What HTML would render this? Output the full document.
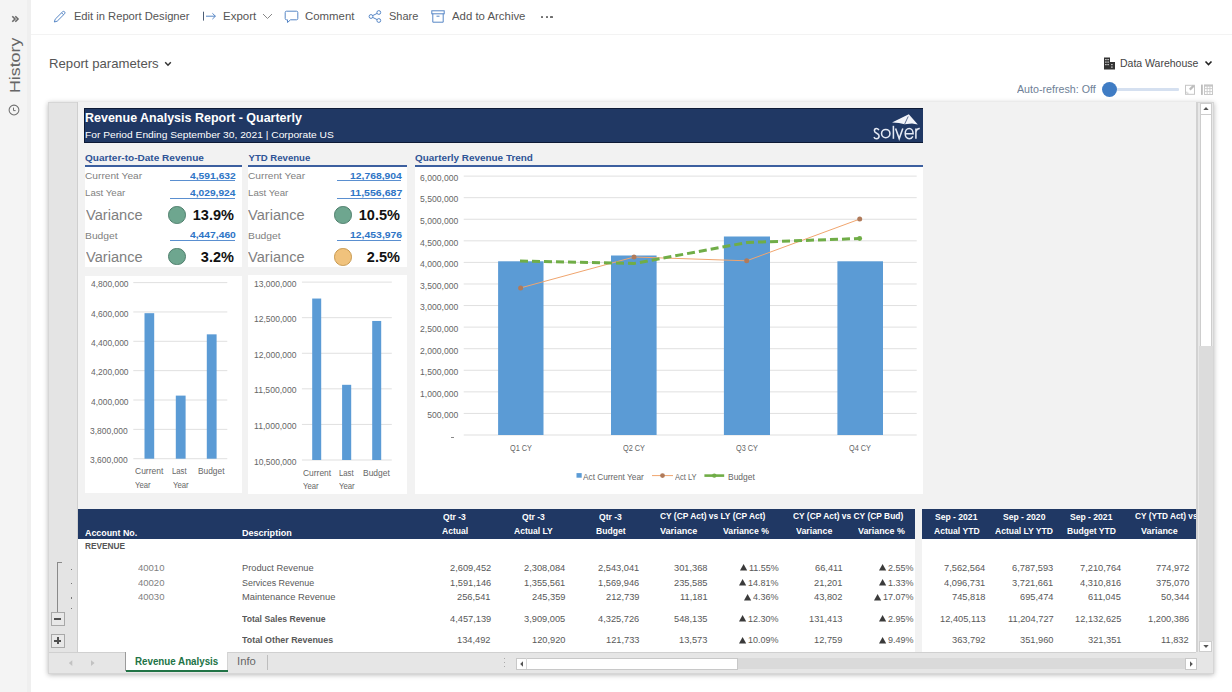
<!DOCTYPE html>
<html><head><meta charset="utf-8"><title>Revenue Analysis</title>
<style>
html,body{margin:0;padding:0;}
body{width:1232px;height:692px;overflow:hidden;position:relative;background:#ffffff;font-family:"Liberation Sans",sans-serif;}
.t{position:absolute;white-space:nowrap;}
.r{position:absolute;}
svg.r{overflow:visible;}
</style></head><body>
<div class="r" style="left:0px;top:0px;width:31px;height:692px;background:#f4f4f4;"></div>
<div class="r" style="left:27.4px;top:0px;width:3.200000000000003px;height:692px;background:#efefef;"></div>
<div class="r" style="left:31px;top:34px;width:1201px;height:1px;background:#f3f3f3;"></div>
<svg class="r" style="left:0;top:0" width="31" height="40"><path d="M12.3 16.3L15 19L12.3 21.7M15.3 16.3L18 19L15.3 21.7" fill="none" stroke="#6a6a6a" stroke-width="1.6"/></svg>
<div class="t" style="left:6.9px;top:92.7px;font-size:15px;line-height:15px;color:#666;transform-origin:0 0;transform:rotate(-90deg) scaleX(1.185);">History</div>
<svg class="r" style="left:7px;top:103px" width="14" height="14" viewBox="0 0 14 14"><circle cx="7" cy="7" r="4.9" fill="none" stroke="#707070" stroke-width="1.05"/><path d="M6.5 4.6V7.6H8.6" fill="none" stroke="#707070" stroke-width="1"/></svg>
<svg class="r" style="left:53px;top:10px" width="14" height="13" viewBox="0 0 14 13"><path d="M2.2 9.2 L9.6 1.8 Q10.6 0.9 11.6 1.8 Q12.5 2.8 11.6 3.8 L4.2 11.2 L1.3 12 Z M8.6 2.8 L10.6 4.8" fill="none" stroke="#5787c6" stroke-width="1" stroke-linejoin="round"/></svg>
<div class="t" style="left:73.88px;top:11.00px;font-size:11.20px;line-height:11.20px;color:#555;">Edit in Report Designer</div>
<svg class="r" style="left:202px;top:10px" width="15" height="12" viewBox="0 0 15 12"><path d="M1.5 1.7V10.6" fill="none" stroke="#4d5d75" stroke-width="1"/><path d="M4 6.2H13.4 M10.4 3.3L13.4 6.2L10.4 9.1" fill="none" stroke="#5787c6" stroke-width="1"/></svg>
<div class="t" style="left:222.85px;top:11.00px;font-size:11.20px;line-height:11.20px;color:#555;transform:scaleX(1.0268);transform-origin:0 0;">Export</div>
<svg class="r" style="left:262px;top:13px" width="11" height="7" viewBox="0 0 11 7"><path d="M1 1L5.5 5.5L10 1" fill="none" stroke="#888" stroke-width="1"/></svg>
<svg class="r" style="left:284px;top:10px" width="15" height="14" viewBox="0 0 15 14"><path d="M2.5 1.2H12.5Q13.8 1.2 13.8 2.5V8.5Q13.8 9.8 12.5 9.8H6.5L3.5 12.5V9.8H2.5Q1.2 9.8 1.2 8.5V2.5Q1.2 1.2 2.5 1.2Z" fill="none" stroke="#5787c6" stroke-width="1" stroke-linejoin="round"/></svg>
<div class="t" style="left:305.43px;top:11.00px;font-size:11.20px;line-height:11.20px;color:#555;transform:scaleX(1.0186);transform-origin:0 0;">Comment</div>
<svg class="r" style="left:368px;top:10px" width="14" height="13" viewBox="0 0 14 13"><circle cx="3" cy="6.5" r="1.9" fill="none" stroke="#5787c6" stroke-width="1"/><circle cx="10.8" cy="2.5" r="1.9" fill="none" stroke="#5787c6" stroke-width="1"/><circle cx="10.8" cy="10.5" r="1.9" fill="none" stroke="#5787c6" stroke-width="1"/><path d="M4.7 5.6L9.1 3.4M4.7 7.4L9.1 9.6" stroke="#5787c6" stroke-width="1"/></svg>
<div class="t" style="left:388.81px;top:11.00px;font-size:11.20px;line-height:11.20px;color:#555;transform:scaleX(0.9794);transform-origin:0 0;">Share</div>
<svg class="r" style="left:431px;top:10px" width="14" height="13" viewBox="0 0 14 13"><rect x="0.8" y="0.8" width="12.4" height="3" fill="none" stroke="#5787c6" stroke-width="1"/><path d="M1.8 3.8V12.2H12.2V3.8 M5.5 6.2H8.5" fill="none" stroke="#5787c6" stroke-width="1"/></svg>
<div class="t" style="left:451.97px;top:11.00px;font-size:11.20px;line-height:11.20px;color:#555;transform:scaleX(1.0180);transform-origin:0 0;">Add to Archive</div>
<div class="r" style="left:540.6px;top:15.5px;width:2.199999999999932px;height:2.1999999999999993px;background:#6e6e6e;border-radius:0.6px;"></div>
<div class="r" style="left:545.5px;top:15.5px;width:2.199999999999932px;height:2.1999999999999993px;background:#6e6e6e;border-radius:0.6px;"></div>
<div class="r" style="left:550.4px;top:15.5px;width:2.199999999999932px;height:2.1999999999999993px;background:#6e6e6e;border-radius:0.6px;"></div>
<div class="t" style="left:48.61px;top:58.00px;font-size:12.90px;line-height:12.90px;color:#555;transform:scaleX(1.0204);transform-origin:0 0;">Report parameters</div>
<svg class="r" style="left:164px;top:61px" width="8" height="6" viewBox="0 0 8 6"><path d="M1.2 1.3L4 4.2L6.8 1.3" fill="none" stroke="#333" stroke-width="1.5"/></svg>
<svg class="r" style="left:1103px;top:57px" width="13" height="13" viewBox="0 0 13 13"><rect x="1" y="0.5" width="6" height="12" fill="#333"/><rect x="7" y="5" width="5" height="7.5" fill="#333"/><g fill="#f4f4f4"><rect x="2.3" y="2" width="1.2" height="1.2"/><rect x="4.5" y="2" width="1.2" height="1.2"/><rect x="2.3" y="4.5" width="1.2" height="1.2"/><rect x="4.5" y="4.5" width="1.2" height="1.2"/><rect x="2.3" y="7" width="1.2" height="1.2"/><rect x="4.5" y="7" width="1.2" height="1.2"/><rect x="8.3" y="7" width="1.2" height="1.2"/><rect x="8.3" y="9.5" width="1.2" height="1.2"/></g></svg>
<div class="t" style="left:1120.13px;top:58.00px;font-size:11.00px;line-height:11.00px;color:#444;transform:scaleX(0.9537);transform-origin:0 0;">Data Warehouse</div>
<svg class="r" style="left:1204px;top:60px" width="9" height="7" viewBox="0 0 9 7"><path d="M1.5 1.5L4.5 4.5L7.5 1.5" fill="none" stroke="#222" stroke-width="1.6"/></svg>
<div class="t" style="left:1017.27px;top:84.00px;font-size:11.00px;line-height:11.00px;color:#6e7f96;transform:scaleX(0.9704);transform-origin:0 0;">Auto-refresh: Off</div>
<div class="r" style="left:1116px;top:88px;width:63px;height:2.5px;background:#d5e0f0;border-radius:1px;"></div>
<div class="r" style="left:1101.5px;top:81.5px;width:15px;height:15px;border-radius:50%;background:#3f7cc4;"></div>
<svg class="r" style="left:0;top:0" width="1232" height="120"><rect x="1185.5" y="85.3" width="9" height="9" fill="none" stroke="#c6c6c6" stroke-width="1"/><path d="M1189.8 89.6L1193.8 85.6" stroke="#bdbdbd" stroke-width="2.2"/><path d="M1186.8 91.6V93.2H1188.6" fill="none" stroke="#c8c8c8" stroke-width="0.9"/><rect x="1201" y="84.6" width="1.8" height="10.3" fill="#bcbcbc"/><rect x="1204.5" y="85.2" width="8" height="9.3" fill="none" stroke="#c8c8c8" stroke-width="1"/><rect x="1204" y="84.6" width="9" height="2" fill="#c4c4c4"/><path d="M1204.5 88.6H1212.5M1204.5 91.6H1212.5M1207.2 85V94.5M1209.9 85V94.5" stroke="#cacaca" stroke-width="0.9"/></svg>
<div class="r" style="left:48px;top:101.8px;width:1166px;height:572.2px;background:#f2f2f2;box-shadow:0 1px 5px rgba(0,0,0,0.28);border:1px solid #d6d6d6;box-sizing:border-box;"></div>
<div class="r" style="left:49px;top:102.8px;width:28px;height:549.2px;background:#e4e4e4;"></div>
<div class="r" style="left:77px;top:102px;width:1px;height:550px;background:#cfcfcf;"></div>
<div class="r" style="left:78px;top:102px;width:1118px;height:550px;overflow:hidden;background:#f2f2f2;"><div class="r" style="left:-78px;top:-102px;width:1232px;height:692px;">
<div class="r" style="left:84px;top:107.8px;width:839px;height:35.10000000000001px;background:#203864;border:1px solid #0d1a35;border-right:none;box-sizing:border-box;"></div>
<div class="t" style="left:84.66px;top:112.00px;font-size:12.94px;line-height:12.94px;color:#ffffff;font-weight:bold;transform:scaleX(0.9656);transform-origin:0 0;">Revenue Analysis Report - Quarterly</div>
<div class="t" style="left:84.66px;top:130.00px;font-size:9.88px;line-height:9.88px;color:#ffffff;transform:scaleX(1.0355);transform-origin:0 0;">For Period Ending September 30, 2021 | Corporate US</div>
<svg class="r" style="left:0;top:0" width="1232" height="150"><path d="M892 122.6L908.8 114.2L917.8 124.4L912 123.5L904.6 124.3L899 122.9Z" fill="#f2f4fa"/><path d="M908.2 116.5L904.6 124.2" stroke="#3a4d75" stroke-width="0.8"/><g fill="none" stroke="#e4e9f4" stroke-width="1.55"><path d="M878.9 130.1C878.2 128.9 877.1 128.5 876.3 128.5C875 128.5 874.4 129.6 874.4 130.8C874.4 133.6 879.1 132.9 879.1 136C879.1 137.7 878 138.7 876.4 138.7C875.3 138.7 874.4 138.1 873.9 137.1"/><circle cx="885.75" cy="133.6" r="4.2"/><path d="M893.4 125.8V138.8"/><path d="M895.6 128.5L899.2 138.6L902.8 128.5"/><path d="M905.2 133.7H913.1C913.1 130.7 911.4 128.5 909.2 128.5C906.8 128.5 905.2 130.8 905.2 133.6C905.2 136.5 906.9 138.7 909.2 138.7C910.9 138.7 912.2 137.8 912.9 136.4"/><path d="M915.9 138.8V128.4M915.9 131.8C916.5 129.4 917.9 128.5 919.8 128.6"/></g></svg>
<div class="t" style="left:85.00px;top:153.00px;font-size:9.59px;line-height:9.59px;color:#2f5496;font-weight:bold;transform:scaleX(1.0493);transform-origin:0 0;">Quarter-to-Date Revenue</div>
<div class="t" style="left:248.53px;top:153.00px;font-size:9.59px;line-height:9.59px;color:#2f5496;font-weight:bold;">YTD Revenue</div>
<div class="t" style="left:414.80px;top:153.00px;font-size:9.59px;line-height:9.59px;color:#2f5496;font-weight:bold;transform:scaleX(1.0347);transform-origin:0 0;">Quarterly Revenue Trend</div>
<div class="r" style="left:85px;top:164.6px;width:156.5px;height:2.3000000000000114px;background:#3c5f9f;"></div>
<div class="r" style="left:247.6px;top:164.6px;width:159.9px;height:2.3000000000000114px;background:#3c5f9f;"></div>
<div class="r" style="left:414.6px;top:164.6px;width:508.4px;height:2.3000000000000114px;background:#3c5f9f;"></div>
<div class="r" style="left:85px;top:166.7px;width:156.5px;height:100.40000000000003px;background:#ffffff;"></div>
<div class="t" style="left:85.29px;top:171.00px;font-size:9.88px;line-height:9.88px;color:#7f7f7f;transform:scaleX(1.0300);transform-origin:0 0;">Current Year</div>
<div class="t" style="left:85.00px;top:188.00px;font-size:9.88px;line-height:9.88px;color:#7f7f7f;transform:scaleX(0.9788);transform-origin:0 0;">Last Year</div>
<div class="t" style="left:85.73px;top:209.00px;font-size:13.95px;line-height:13.95px;color:#7f7f7f;transform:scaleX(1.0492);transform-origin:0 0;">Variance</div>
<div class="t" style="left:84.95px;top:231.00px;font-size:9.88px;line-height:9.88px;color:#7f7f7f;transform:scaleX(1.0446);transform-origin:0 0;">Budget</div>
<div class="t" style="left:85.73px;top:251.00px;font-size:13.95px;line-height:13.95px;color:#7f7f7f;transform:scaleX(1.0492);transform-origin:0 0;">Variance</div>
<div class="t" style="left:190.25px;top:171.00px;font-size:9.88px;line-height:9.88px;color:#2e75c6;font-weight:bold;transform:scaleX(1.0428);transform-origin:0 0;">4,591,632</div>
<div class="r" style="left:170.3px;top:180.3px;width:65.0px;height:1.0px;background:#5a8fd0;"></div>
<div class="t" style="left:190.25px;top:188.00px;font-size:9.88px;line-height:9.88px;color:#2e75c6;font-weight:bold;transform:scaleX(1.0352);transform-origin:0 0;">4,029,924</div>
<div class="r" style="left:170.3px;top:197.5px;width:65.0px;height:1.0px;background:#5a8fd0;"></div>
<div class="t" style="left:190.25px;top:230.00px;font-size:9.88px;line-height:9.88px;color:#2e75c6;font-weight:bold;transform:scaleX(1.0434);transform-origin:0 0;">4,447,460</div>
<div class="r" style="left:170.3px;top:240.0px;width:65.0px;height:1.0px;background:#5a8fd0;"></div>
<div class="r" style="left:168.2px;top:206.1px;width:15.6px;height:15.6px;border-radius:50%;background:#6ea68f;border:0.7px solid #4f7f6d;"></div>
<div class="t" style="left:192.76px;top:208.00px;font-size:14.53px;line-height:14.53px;color:#111;font-weight:bold;">13.9%</div>
<div class="r" style="left:168.2px;top:247.8px;width:15.6px;height:15.6px;border-radius:50%;background:#6ea68f;border:0.7px solid #4f7f6d;"></div>
<div class="t" style="left:200.86px;top:250.00px;font-size:14.53px;line-height:14.53px;color:#111;font-weight:bold;">3.2%</div>
<div class="r" style="left:247.6px;top:166.7px;width:159.9px;height:100.40000000000003px;background:#ffffff;"></div>
<div class="t" style="left:247.89px;top:171.00px;font-size:9.88px;line-height:9.88px;color:#7f7f7f;transform:scaleX(1.0300);transform-origin:0 0;">Current Year</div>
<div class="t" style="left:247.60px;top:188.00px;font-size:9.88px;line-height:9.88px;color:#7f7f7f;transform:scaleX(0.9788);transform-origin:0 0;">Last Year</div>
<div class="t" style="left:248.33px;top:209.00px;font-size:13.95px;line-height:13.95px;color:#7f7f7f;transform:scaleX(1.0492);transform-origin:0 0;">Variance</div>
<div class="t" style="left:247.55px;top:231.00px;font-size:9.88px;line-height:9.88px;color:#7f7f7f;transform:scaleX(1.0446);transform-origin:0 0;">Budget</div>
<div class="t" style="left:248.33px;top:251.00px;font-size:13.95px;line-height:13.95px;color:#7f7f7f;transform:scaleX(1.0492);transform-origin:0 0;">Variance</div>
<div class="t" style="left:349.85px;top:171.00px;font-size:9.88px;line-height:9.88px;color:#2e75c6;font-weight:bold;transform:scaleX(1.0492);transform-origin:0 0;">12,768,904</div>
<div class="r" style="left:336.7px;top:180.3px;width:64.60000000000002px;height:1.0px;background:#5a8fd0;"></div>
<div class="t" style="left:349.84px;top:188.00px;font-size:9.88px;line-height:9.88px;color:#2e75c6;font-weight:bold;transform:scaleX(1.0692);transform-origin:0 0;">11,556,687</div>
<div class="r" style="left:336.7px;top:197.5px;width:64.60000000000002px;height:1.0px;background:#5a8fd0;"></div>
<div class="t" style="left:349.85px;top:230.00px;font-size:9.88px;line-height:9.88px;color:#2e75c6;font-weight:bold;transform:scaleX(1.0556);transform-origin:0 0;">12,453,976</div>
<div class="r" style="left:336.7px;top:240.0px;width:64.60000000000002px;height:1.0px;background:#5a8fd0;"></div>
<div class="r" style="left:334.2px;top:206.1px;width:15.6px;height:15.6px;border-radius:50%;background:#6ea68f;border:0.7px solid #4f7f6d;"></div>
<div class="t" style="left:358.76px;top:208.00px;font-size:14.53px;line-height:14.53px;color:#111;font-weight:bold;">10.5%</div>
<div class="r" style="left:334.2px;top:248.0px;width:15.6px;height:15.6px;border-radius:50%;background:#f0c27c;border:0.7px solid #c99a50;"></div>
<div class="t" style="left:366.86px;top:250.00px;font-size:14.53px;line-height:14.53px;color:#111;font-weight:bold;">2.5%</div>
<div class="r" style="left:85px;top:275.6px;width:157px;height:217.89999999999998px;background:#ffffff;"></div>
<svg class="r" style="left:0;top:0" width="1232" height="692"><rect x="133.3" y="282.10" width="94.00" height="1" fill="#e0e0e0"/><rect x="133.3" y="311.45" width="94.00" height="1" fill="#e0e0e0"/><rect x="133.3" y="340.80" width="94.00" height="1" fill="#e0e0e0"/><rect x="133.3" y="370.15" width="94.00" height="1" fill="#e0e0e0"/><rect x="133.3" y="399.50" width="94.00" height="1" fill="#e0e0e0"/><rect x="133.3" y="428.85" width="94.00" height="1" fill="#e0e0e0"/><rect x="133.3" y="458.20" width="94.00" height="1" fill="#e0e0e0"/><rect x="144.5" y="313.18" width="9.70" height="145.52" fill="#5b9bd5"/><rect x="175.8" y="395.61" width="9.80" height="63.09" fill="#5b9bd5"/><rect x="206.8" y="334.34" width="9.80" height="124.36" fill="#5b9bd5"/></svg>
<div class="t" style="left:90.61px;top:280.00px;font-size:8.58px;line-height:8.58px;color:#666;transform:scaleX(0.9834);transform-origin:0 0;">4,800,000</div>
<div class="t" style="left:90.61px;top:310.00px;font-size:8.58px;line-height:8.58px;color:#666;transform:scaleX(0.9834);transform-origin:0 0;">4,600,000</div>
<div class="t" style="left:90.61px;top:339.00px;font-size:8.58px;line-height:8.58px;color:#666;transform:scaleX(0.9834);transform-origin:0 0;">4,400,000</div>
<div class="t" style="left:90.61px;top:368.00px;font-size:8.58px;line-height:8.58px;color:#666;transform:scaleX(0.9834);transform-origin:0 0;">4,200,000</div>
<div class="t" style="left:90.61px;top:398.00px;font-size:8.58px;line-height:8.58px;color:#666;transform:scaleX(0.9834);transform-origin:0 0;">4,000,000</div>
<div class="t" style="left:90.48px;top:427.00px;font-size:8.58px;line-height:8.58px;color:#666;transform:scaleX(0.9868);transform-origin:0 0;">3,800,000</div>
<div class="t" style="left:90.48px;top:456.00px;font-size:8.58px;line-height:8.58px;color:#666;transform:scaleX(0.9868);transform-origin:0 0;">3,600,000</div>
<div class="t" style="left:135.18px;top:467.00px;font-size:8.58px;line-height:8.58px;color:#666;transform:scaleX(0.9891);transform-origin:0 0;">Current</div>
<div class="t" style="left:135.43px;top:481.00px;font-size:8.58px;line-height:8.58px;color:#666;transform:scaleX(0.8999);transform-origin:0 0;">Year</div>
<div class="t" style="left:172.16px;top:467.00px;font-size:8.58px;line-height:8.58px;color:#666;transform:scaleX(0.9005);transform-origin:0 0;">Last</div>
<div class="t" style="left:172.63px;top:481.00px;font-size:8.58px;line-height:8.58px;color:#666;transform:scaleX(0.9058);transform-origin:0 0;">Year</div>
<div class="t" style="left:197.91px;top:467.00px;font-size:8.58px;line-height:8.58px;color:#666;transform:scaleX(0.9730);transform-origin:0 0;">Budget</div>
<div class="r" style="left:247.6px;top:275.2px;width:159.9px;height:218.8px;background:#ffffff;"></div>
<svg class="r" style="left:0;top:0" width="1232" height="692"><rect x="301.9" y="281.60" width="89.90" height="1" fill="#e0e0e0"/><rect x="301.9" y="317.18" width="89.90" height="1" fill="#e0e0e0"/><rect x="301.9" y="352.76" width="89.90" height="1" fill="#e0e0e0"/><rect x="301.9" y="388.34" width="89.90" height="1" fill="#e0e0e0"/><rect x="301.9" y="423.92" width="89.90" height="1" fill="#e0e0e0"/><rect x="301.9" y="459.50" width="89.90" height="1" fill="#e0e0e0"/><rect x="312.2" y="298.54" width="9.00" height="161.46" fill="#5b9bd5"/><rect x="342.1" y="384.81" width="9.10" height="75.19" fill="#5b9bd5"/><rect x="372.2" y="320.96" width="9.00" height="139.04" fill="#5b9bd5"/></svg>
<div class="t" style="left:253.56px;top:280.00px;font-size:8.58px;line-height:8.58px;color:#666;transform:scaleX(0.9891);transform-origin:0 0;">13,000,000</div>
<div class="t" style="left:253.56px;top:315.00px;font-size:8.58px;line-height:8.58px;color:#666;transform:scaleX(0.9891);transform-origin:0 0;">12,500,000</div>
<div class="t" style="left:253.56px;top:351.00px;font-size:8.58px;line-height:8.58px;color:#666;transform:scaleX(0.9891);transform-origin:0 0;">12,000,000</div>
<div class="t" style="left:253.55px;top:386.00px;font-size:8.58px;line-height:8.58px;color:#666;transform:scaleX(1.0045);transform-origin:0 0;">11,500,000</div>
<div class="t" style="left:253.55px;top:422.00px;font-size:8.58px;line-height:8.58px;color:#666;transform:scaleX(1.0045);transform-origin:0 0;">11,000,000</div>
<div class="t" style="left:253.56px;top:458.00px;font-size:8.58px;line-height:8.58px;color:#666;transform:scaleX(0.9891);transform-origin:0 0;">10,500,000</div>
<div class="t" style="left:302.58px;top:469.00px;font-size:8.58px;line-height:8.58px;color:#666;transform:scaleX(0.9820);transform-origin:0 0;">Current</div>
<div class="t" style="left:302.83px;top:482.00px;font-size:8.58px;line-height:8.58px;color:#666;transform:scaleX(0.8999);transform-origin:0 0;">Year</div>
<div class="t" style="left:338.56px;top:469.00px;font-size:8.58px;line-height:8.58px;color:#666;transform:scaleX(0.9005);transform-origin:0 0;">Last</div>
<div class="t" style="left:339.03px;top:482.00px;font-size:8.58px;line-height:8.58px;color:#666;transform:scaleX(0.9058);transform-origin:0 0;">Year</div>
<div class="t" style="left:363.10px;top:469.00px;font-size:8.58px;line-height:8.58px;color:#666;transform:scaleX(0.9844);transform-origin:0 0;">Budget</div>
<div class="r" style="left:414.6px;top:166.7px;width:508.79999999999995px;height:327.3px;background:#ffffff;"></div>
<svg class="r" style="left:0;top:0" width="1232" height="692"><rect x="463.7" y="175.60" width="453" height="1" fill="#e0e0e0"/><rect x="463.7" y="197.17" width="453" height="1" fill="#e0e0e0"/><rect x="463.7" y="218.75" width="453" height="1" fill="#e0e0e0"/><rect x="463.7" y="240.32" width="453" height="1" fill="#e0e0e0"/><rect x="463.7" y="261.90" width="453" height="1" fill="#e0e0e0"/><rect x="463.7" y="283.48" width="453" height="1" fill="#e0e0e0"/><rect x="463.7" y="305.05" width="453" height="1" fill="#e0e0e0"/><rect x="463.7" y="326.62" width="453" height="1" fill="#e0e0e0"/><rect x="463.7" y="348.20" width="453" height="1" fill="#e0e0e0"/><rect x="463.7" y="369.77" width="453" height="1" fill="#e0e0e0"/><rect x="463.7" y="391.35" width="453" height="1" fill="#e0e0e0"/><rect x="463.7" y="412.92" width="453" height="1" fill="#e0e0e0"/><rect x="463.7" y="434.50" width="453" height="1" fill="#e0e0e0"/><rect x="498.1" y="261.3" width="45.4" height="173.7" fill="#5b9bd5"/><rect x="611" y="255.5" width="45.6" height="179.5" fill="#5b9bd5"/><rect x="723.9" y="236.5" width="46.1" height="198.5" fill="#5b9bd5"/><rect x="837.4" y="261.3" width="45.6" height="173.7" fill="#5b9bd5"/><polyline points="520.6,287.9 634,257 746.7,260.8 859.7,219.1" fill="none" stroke="#f0a56e" stroke-width="1"/><circle cx="520.6" cy="287.9" r="2.5" fill="#b07a5a"/><circle cx="634" cy="257" r="2.5" fill="#b07a5a"/><circle cx="746.7" cy="260.8" r="2.5" fill="#b07a5a"/><circle cx="859.7" cy="219.1" r="2.5" fill="#b07a5a"/><polyline points="520,261 634,263.5 747,242.5 859.7,238.5" fill="none" stroke="#70ad47" stroke-width="3" stroke-dasharray="8 4"/><circle cx="859.7" cy="238.5" r="2.4" fill="#70ad47"/><rect x="576.5" y="473.1" width="5.2" height="4.6" fill="#5b9bd5"/><path d="M652 475.6H673" stroke="#f0a56e" stroke-width="1"/><circle cx="662.5" cy="475.6" r="2.4" fill="#b07a5a"/><path d="M704.4 475.6H724.2" stroke="#70ad47" stroke-width="2.6"/><circle cx="714.3" cy="475.6" r="2.2" fill="#70ad47"/></svg>
<div class="t" style="left:420.08px;top:174.00px;font-size:8.58px;line-height:8.58px;color:#666;">6,000,000</div>
<div class="t" style="left:420.08px;top:195.00px;font-size:8.58px;line-height:8.58px;color:#666;">5,500,000</div>
<div class="t" style="left:420.08px;top:217.00px;font-size:8.58px;line-height:8.58px;color:#666;">5,000,000</div>
<div class="t" style="left:420.08px;top:239.00px;font-size:8.58px;line-height:8.58px;color:#666;">4,500,000</div>
<div class="t" style="left:420.08px;top:260.00px;font-size:8.58px;line-height:8.58px;color:#666;">4,000,000</div>
<div class="t" style="left:420.08px;top:282.00px;font-size:8.58px;line-height:8.58px;color:#666;">3,500,000</div>
<div class="t" style="left:420.08px;top:303.00px;font-size:8.58px;line-height:8.58px;color:#666;">3,000,000</div>
<div class="t" style="left:420.08px;top:325.00px;font-size:8.58px;line-height:8.58px;color:#666;">2,500,000</div>
<div class="t" style="left:420.08px;top:347.00px;font-size:8.58px;line-height:8.58px;color:#666;">2,000,000</div>
<div class="t" style="left:420.08px;top:368.00px;font-size:8.58px;line-height:8.58px;color:#666;">1,500,000</div>
<div class="t" style="left:420.08px;top:390.00px;font-size:8.58px;line-height:8.58px;color:#666;">1,000,000</div>
<div class="t" style="left:427.24px;top:411.00px;font-size:8.58px;line-height:8.58px;color:#666;">500,000</div>
<div class="r" style="left:451px;top:437px;width:3px;height:1px;background:#888;"></div>
<div class="t" style="left:509.70px;top:444.00px;font-size:8.58px;line-height:8.58px;color:#666;transform:scaleX(0.8549);transform-origin:0 0;">Q1 CY</div>
<div class="t" style="left:622.70px;top:444.00px;font-size:8.58px;line-height:8.58px;color:#666;transform:scaleX(0.8549);transform-origin:0 0;">Q2 CY</div>
<div class="t" style="left:735.85px;top:444.00px;font-size:8.58px;line-height:8.58px;color:#666;transform:scaleX(0.8549);transform-origin:0 0;">Q3 CY</div>
<div class="t" style="left:849.10px;top:444.00px;font-size:8.58px;line-height:8.58px;color:#666;transform:scaleX(0.8549);transform-origin:0 0;">Q4 CY</div>
<div class="t" style="left:583.28px;top:473.00px;font-size:8.58px;line-height:8.58px;color:#666;transform:scaleX(0.9654);transform-origin:0 0;">Act Current Year</div>
<div class="t" style="left:675.18px;top:473.00px;font-size:8.58px;line-height:8.58px;color:#666;transform:scaleX(0.8764);transform-origin:0 0;">Act LY</div>
<div class="t" style="left:727.60px;top:473.00px;font-size:8.58px;line-height:8.58px;color:#666;transform:scaleX(0.9844);transform-origin:0 0;">Budget</div>
<div class="r" style="left:78px;top:508.7px;width:837px;height:30.69999999999999px;background:#203864;"></div>
<div class="r" style="left:922.4px;top:508.7px;width:273.80000000000007px;height:30.69999999999999px;background:#203864;"></div>
<div class="r" style="left:78px;top:539.4px;width:837px;height:160.60000000000002px;background:#ffffff;"></div>
<div class="r" style="left:922.4px;top:539.4px;width:273.80000000000007px;height:160.60000000000002px;background:#ffffff;"></div>
<div class="t" style="left:85.28px;top:528.00px;font-size:9.59px;line-height:9.59px;color:#ffffff;font-weight:bold;transform:scaleX(0.9246);transform-origin:0 0;">Account No.</div>
<div class="t" style="left:241.69px;top:528.00px;font-size:9.59px;line-height:9.59px;color:#ffffff;font-weight:bold;transform:scaleX(0.9430);transform-origin:0 0;">Description</div>
<div class="t" style="left:443.34px;top:512.00px;font-size:9.59px;line-height:9.59px;color:#ffffff;font-weight:bold;transform:scaleX(0.8950);transform-origin:0 0;">Qtr -3</div>
<div class="t" style="left:441.88px;top:526.00px;font-size:9.59px;line-height:9.59px;color:#ffffff;font-weight:bold;transform:scaleX(0.8950);transform-origin:0 0;">Actual</div>
<div class="t" style="left:521.74px;top:512.00px;font-size:9.59px;line-height:9.59px;color:#ffffff;font-weight:bold;transform:scaleX(0.8950);transform-origin:0 0;">Qtr -3</div>
<div class="t" style="left:513.76px;top:526.00px;font-size:9.59px;line-height:9.59px;color:#ffffff;font-weight:bold;transform:scaleX(0.8950);transform-origin:0 0;">Actual LY</div>
<div class="t" style="left:599.14px;top:512.00px;font-size:9.59px;line-height:9.59px;color:#ffffff;font-weight:bold;transform:scaleX(0.8950);transform-origin:0 0;">Qtr -3</div>
<div class="t" style="left:595.59px;top:526.00px;font-size:9.59px;line-height:9.59px;color:#ffffff;font-weight:bold;transform:scaleX(0.8950);transform-origin:0 0;">Budget</div>
<div class="t" style="left:935.05px;top:512.00px;font-size:9.59px;line-height:9.59px;color:#ffffff;font-weight:bold;transform:scaleX(0.8950);transform-origin:0 0;">Sep - 2021</div>
<div class="t" style="left:933.55px;top:526.00px;font-size:9.59px;line-height:9.59px;color:#ffffff;font-weight:bold;transform:scaleX(0.8950);transform-origin:0 0;">Actual YTD</div>
<div class="t" style="left:1003.10px;top:512.00px;font-size:9.59px;line-height:9.59px;color:#ffffff;font-weight:bold;transform:scaleX(0.8950);transform-origin:0 0;">Sep - 2020</div>
<div class="t" style="left:995.34px;top:526.00px;font-size:9.59px;line-height:9.59px;color:#ffffff;font-weight:bold;transform:scaleX(0.8950);transform-origin:0 0;">Actual LY YTD</div>
<div class="t" style="left:1070.35px;top:512.00px;font-size:9.59px;line-height:9.59px;color:#ffffff;font-weight:bold;transform:scaleX(0.8950);transform-origin:0 0;">Sep - 2021</div>
<div class="t" style="left:1067.00px;top:526.00px;font-size:9.59px;line-height:9.59px;color:#ffffff;font-weight:bold;transform:scaleX(0.8950);transform-origin:0 0;">Budget YTD</div>
<div class="t" style="left:659.66px;top:511.00px;font-size:9.59px;line-height:9.59px;color:#ffffff;font-weight:bold;transform:scaleX(0.8766);transform-origin:0 0;">CY (CP Act) vs LY (CP Act)</div>
<div class="t" style="left:793.06px;top:511.00px;font-size:9.59px;line-height:9.59px;color:#ffffff;font-weight:bold;transform:scaleX(0.8773);transform-origin:0 0;">CY (CP Act) vs CY (CP Bud)</div>
<div class="t" style="left:1134.67px;top:511.00px;font-size:9.59px;line-height:9.59px;color:#ffffff;font-weight:bold;transform:scaleX(0.8646);transform-origin:0 0;">CY (YTD Act) vs</div>
<div class="t" style="left:659.93px;top:526.00px;font-size:9.59px;line-height:9.59px;color:#ffffff;font-weight:bold;transform:scaleX(0.9471);transform-origin:0 0;">Variance</div>
<div class="t" style="left:723.23px;top:526.00px;font-size:9.59px;line-height:9.59px;color:#ffffff;font-weight:bold;transform:scaleX(0.9078);transform-origin:0 0;">Variance %</div>
<div class="t" style="left:795.93px;top:526.00px;font-size:9.59px;line-height:9.59px;color:#ffffff;font-weight:bold;transform:scaleX(0.9215);transform-origin:0 0;">Variance</div>
<div class="t" style="left:858.33px;top:526.00px;font-size:9.59px;line-height:9.59px;color:#ffffff;font-weight:bold;transform:scaleX(0.9257);transform-origin:0 0;">Variance %</div>
<div class="t" style="left:1141.28px;top:526.00px;font-size:9.59px;line-height:9.59px;color:#ffffff;font-weight:bold;transform:scaleX(0.9343);transform-origin:0 0;">Variance</div>
<div class="t" style="left:84.94px;top:541.00px;font-size:9.59px;line-height:9.59px;color:#555;font-weight:bold;transform:scaleX(0.8666);transform-origin:0 0;">REVENUE</div>
<div class="t" style="left:138.49px;top:563.00px;font-size:9.67px;line-height:9.67px;color:#7f7f7f;transform:scaleX(0.9851);transform-origin:0 0;">40010</div>
<div class="t" style="left:241.73px;top:563.00px;font-size:9.67px;line-height:9.67px;color:#595959;transform:scaleX(0.9597);transform-origin:0 0;">Product Revenue</div>
<div class="t" style="left:449.68px;top:563.00px;font-size:9.67px;line-height:9.67px;color:#595959;transform:scaleX(0.9603);transform-origin:0 0;">2,609,452</div>
<div class="t" style="left:524.17px;top:563.00px;font-size:9.67px;line-height:9.67px;color:#595959;transform:scaleX(0.9603);transform-origin:0 0;">2,308,084</div>
<div class="t" style="left:598.26px;top:563.00px;font-size:9.67px;line-height:9.67px;color:#595959;transform:scaleX(0.9603);transform-origin:0 0;">2,543,041</div>
<div class="t" style="left:673.66px;top:563.00px;font-size:9.67px;line-height:9.67px;color:#595959;transform:scaleX(0.9603);transform-origin:0 0;">301,368</div>
<div class="t" style="left:748.52px;top:563.00px;font-size:9.67px;line-height:9.67px;color:#595959;transform:scaleX(0.9323);transform-origin:0 0;">11.55%</div>
<svg class="r" style="left:740.1px;top:564.3px" width="7.2" height="6.4" viewBox="0 0 7.2 6.4"><path d="M3.6 0L7.2 6.4H0Z" fill="#3a3a3a"/></svg>
<div class="t" style="left:814.76px;top:563.00px;font-size:9.67px;line-height:9.67px;color:#595959;transform:scaleX(0.9603);transform-origin:0 0;">66,411</div>
<div class="t" style="left:887.74px;top:563.00px;font-size:9.67px;line-height:9.67px;color:#595959;transform:scaleX(0.9323);transform-origin:0 0;">2.55%</div>
<svg class="r" style="left:879.1px;top:564.3px" width="7.2" height="6.4" viewBox="0 0 7.2 6.4"><path d="M3.6 0L7.2 6.4H0Z" fill="#3a3a3a"/></svg>
<div class="t" style="left:943.87px;top:563.00px;font-size:9.67px;line-height:9.67px;color:#595959;transform:scaleX(0.9603);transform-origin:0 0;">7,562,564</div>
<div class="t" style="left:1011.91px;top:563.00px;font-size:9.67px;line-height:9.67px;color:#595959;transform:scaleX(0.9603);transform-origin:0 0;">6,787,593</div>
<div class="t" style="left:1079.77px;top:563.00px;font-size:9.67px;line-height:9.67px;color:#595959;transform:scaleX(0.9603);transform-origin:0 0;">7,210,764</div>
<div class="t" style="left:1155.63px;top:563.00px;font-size:9.67px;line-height:9.67px;color:#595959;transform:scaleX(0.9603);transform-origin:0 0;">774,972</div>
<div class="t" style="left:138.49px;top:578.00px;font-size:9.67px;line-height:9.67px;color:#7f7f7f;transform:scaleX(0.9851);transform-origin:0 0;">40020</div>
<div class="t" style="left:242.10px;top:578.00px;font-size:9.67px;line-height:9.67px;color:#595959;transform:scaleX(0.9215);transform-origin:0 0;">Services Revenue</div>
<div class="t" style="left:449.61px;top:578.00px;font-size:9.67px;line-height:9.67px;color:#595959;transform:scaleX(0.9603);transform-origin:0 0;">1,591,146</div>
<div class="t" style="left:524.36px;top:578.00px;font-size:9.67px;line-height:9.67px;color:#595959;transform:scaleX(0.9603);transform-origin:0 0;">1,355,561</div>
<div class="t" style="left:598.21px;top:578.00px;font-size:9.67px;line-height:9.67px;color:#595959;transform:scaleX(0.9603);transform-origin:0 0;">1,569,946</div>
<div class="t" style="left:673.64px;top:578.00px;font-size:9.67px;line-height:9.67px;color:#595959;transform:scaleX(0.9603);transform-origin:0 0;">235,585</div>
<div class="t" style="left:747.84px;top:578.00px;font-size:9.67px;line-height:9.67px;color:#595959;transform:scaleX(0.9323);transform-origin:0 0;">14.81%</div>
<svg class="r" style="left:739.4px;top:579.2px" width="7.2" height="6.4" viewBox="0 0 7.2 6.4"><path d="M3.6 0L7.2 6.4H0Z" fill="#3a3a3a"/></svg>
<div class="t" style="left:814.06px;top:578.00px;font-size:9.67px;line-height:9.67px;color:#595959;transform:scaleX(0.9603);transform-origin:0 0;">21,201</div>
<div class="t" style="left:887.74px;top:578.00px;font-size:9.67px;line-height:9.67px;color:#595959;transform:scaleX(0.9323);transform-origin:0 0;">1.33%</div>
<svg class="r" style="left:879.3px;top:579.2px" width="7.2" height="6.4" viewBox="0 0 7.2 6.4"><path d="M3.6 0L7.2 6.4H0Z" fill="#3a3a3a"/></svg>
<div class="t" style="left:944.06px;top:578.00px;font-size:9.67px;line-height:9.67px;color:#595959;transform:scaleX(0.9603);transform-origin:0 0;">4,096,731</div>
<div class="t" style="left:1011.96px;top:578.00px;font-size:9.67px;line-height:9.67px;color:#595959;transform:scaleX(0.9603);transform-origin:0 0;">3,721,661</div>
<div class="t" style="left:1079.91px;top:578.00px;font-size:9.67px;line-height:9.67px;color:#595959;transform:scaleX(0.9603);transform-origin:0 0;">4,310,816</div>
<div class="t" style="left:1155.52px;top:578.00px;font-size:9.67px;line-height:9.67px;color:#595959;transform:scaleX(0.9603);transform-origin:0 0;">375,070</div>
<div class="t" style="left:138.49px;top:592.00px;font-size:9.67px;line-height:9.67px;color:#7f7f7f;transform:scaleX(0.9851);transform-origin:0 0;">40030</div>
<div class="t" style="left:241.73px;top:592.00px;font-size:9.67px;line-height:9.67px;color:#595959;transform:scaleX(0.9665);transform-origin:0 0;">Maintenance Revenue</div>
<div class="t" style="left:457.41px;top:592.00px;font-size:9.67px;line-height:9.67px;color:#595959;transform:scaleX(0.9603);transform-origin:0 0;">256,541</div>
<div class="t" style="left:532.09px;top:592.00px;font-size:9.67px;line-height:9.67px;color:#595959;transform:scaleX(0.9603);transform-origin:0 0;">245,359</div>
<div class="t" style="left:605.99px;top:592.00px;font-size:9.67px;line-height:9.67px;color:#595959;transform:scaleX(0.9603);transform-origin:0 0;">212,739</div>
<div class="t" style="left:679.56px;top:592.00px;font-size:9.67px;line-height:9.67px;color:#595959;transform:scaleX(0.9603);transform-origin:0 0;">11,181</div>
<div class="t" style="left:752.84px;top:592.00px;font-size:9.67px;line-height:9.67px;color:#595959;transform:scaleX(0.9323);transform-origin:0 0;">4.36%</div>
<svg class="r" style="left:743.9px;top:593.9px" width="7.2" height="6.4" viewBox="0 0 7.2 6.4"><path d="M3.6 0L7.2 6.4H0Z" fill="#3a3a3a"/></svg>
<div class="t" style="left:814.08px;top:592.00px;font-size:9.67px;line-height:9.67px;color:#595959;transform:scaleX(0.9603);transform-origin:0 0;">43,802</div>
<div class="t" style="left:882.74px;top:592.00px;font-size:9.67px;line-height:9.67px;color:#595959;transform:scaleX(0.9323);transform-origin:0 0;">17.07%</div>
<svg class="r" style="left:874.3px;top:593.9px" width="7.2" height="6.4" viewBox="0 0 7.2 6.4"><path d="M3.6 0L7.2 6.4H0Z" fill="#3a3a3a"/></svg>
<div class="t" style="left:951.76px;top:592.00px;font-size:9.67px;line-height:9.67px;color:#595959;transform:scaleX(0.9603);transform-origin:0 0;">745,818</div>
<div class="t" style="left:1019.52px;top:592.00px;font-size:9.67px;line-height:9.67px;color:#595959;transform:scaleX(0.9603);transform-origin:0 0;">695,474</div>
<div class="t" style="left:1088.31px;top:592.00px;font-size:9.67px;line-height:9.67px;color:#595959;transform:scaleX(0.9603);transform-origin:0 0;">611,045</div>
<div class="t" style="left:1160.58px;top:592.00px;font-size:9.67px;line-height:9.67px;color:#595959;transform:scaleX(0.9603);transform-origin:0 0;">50,344</div>
<div class="t" style="left:242.41px;top:614.00px;font-size:9.67px;line-height:9.67px;color:#595959;font-weight:bold;transform:scaleX(0.8959);transform-origin:0 0;">Total Sales Revenue</div>
<div class="t" style="left:449.64px;top:614.00px;font-size:9.67px;line-height:9.67px;color:#595959;transform:scaleX(0.9603);transform-origin:0 0;">4,457,139</div>
<div class="t" style="left:524.29px;top:614.00px;font-size:9.67px;line-height:9.67px;color:#595959;transform:scaleX(0.9603);transform-origin:0 0;">3,909,005</div>
<div class="t" style="left:598.21px;top:614.00px;font-size:9.67px;line-height:9.67px;color:#595959;transform:scaleX(0.9603);transform-origin:0 0;">4,325,726</div>
<div class="t" style="left:673.64px;top:614.00px;font-size:9.67px;line-height:9.67px;color:#595959;transform:scaleX(0.9603);transform-origin:0 0;">548,135</div>
<div class="t" style="left:747.84px;top:614.00px;font-size:9.67px;line-height:9.67px;color:#595959;transform:scaleX(0.9323);transform-origin:0 0;">12.30%</div>
<svg class="r" style="left:739.4px;top:615.3px" width="7.2" height="6.4" viewBox="0 0 7.2 6.4"><path d="M3.6 0L7.2 6.4H0Z" fill="#3a3a3a"/></svg>
<div class="t" style="left:808.86px;top:614.00px;font-size:9.67px;line-height:9.67px;color:#595959;transform:scaleX(0.9603);transform-origin:0 0;">131,413</div>
<div class="t" style="left:887.74px;top:614.00px;font-size:9.67px;line-height:9.67px;color:#595959;transform:scaleX(0.9323);transform-origin:0 0;">2.95%</div>
<svg class="r" style="left:879.1px;top:615.3px" width="7.2" height="6.4" viewBox="0 0 7.2 6.4"><path d="M3.6 0L7.2 6.4H0Z" fill="#3a3a3a"/></svg>
<div class="t" style="left:939.53px;top:614.00px;font-size:9.67px;line-height:9.67px;color:#595959;transform:scaleX(0.9603);transform-origin:0 0;">12,405,113</div>
<div class="t" style="left:1007.50px;top:614.00px;font-size:9.67px;line-height:9.67px;color:#595959;transform:scaleX(0.9603);transform-origin:0 0;">11,204,727</div>
<div class="t" style="left:1074.71px;top:614.00px;font-size:9.67px;line-height:9.67px;color:#595959;transform:scaleX(0.9603);transform-origin:0 0;">12,132,625</div>
<div class="t" style="left:1147.81px;top:614.00px;font-size:9.67px;line-height:9.67px;color:#595959;transform:scaleX(0.9603);transform-origin:0 0;">1,200,386</div>
<div class="t" style="left:242.41px;top:635.00px;font-size:9.67px;line-height:9.67px;color:#595959;font-weight:bold;transform:scaleX(0.9201);transform-origin:0 0;">Total Other Revenues</div>
<div class="t" style="left:457.43px;top:635.00px;font-size:9.67px;line-height:9.67px;color:#595959;transform:scaleX(0.9603);transform-origin:0 0;">134,492</div>
<div class="t" style="left:532.02px;top:635.00px;font-size:9.67px;line-height:9.67px;color:#595959;transform:scaleX(0.9603);transform-origin:0 0;">120,920</div>
<div class="t" style="left:605.96px;top:635.00px;font-size:9.67px;line-height:9.67px;color:#595959;transform:scaleX(0.9603);transform-origin:0 0;">121,733</div>
<div class="t" style="left:678.81px;top:635.00px;font-size:9.67px;line-height:9.67px;color:#595959;transform:scaleX(0.9603);transform-origin:0 0;">13,573</div>
<div class="t" style="left:747.84px;top:635.00px;font-size:9.67px;line-height:9.67px;color:#595959;transform:scaleX(0.9323);transform-origin:0 0;">10.09%</div>
<svg class="r" style="left:739.4px;top:636.8px" width="7.2" height="6.4" viewBox="0 0 7.2 6.4"><path d="M3.6 0L7.2 6.4H0Z" fill="#3a3a3a"/></svg>
<div class="t" style="left:814.04px;top:635.00px;font-size:9.67px;line-height:9.67px;color:#595959;transform:scaleX(0.9603);transform-origin:0 0;">12,759</div>
<div class="t" style="left:887.74px;top:635.00px;font-size:9.67px;line-height:9.67px;color:#595959;transform:scaleX(0.9323);transform-origin:0 0;">9.49%</div>
<svg class="r" style="left:879.1px;top:636.8px" width="7.2" height="6.4" viewBox="0 0 7.2 6.4"><path d="M3.6 0L7.2 6.4H0Z" fill="#3a3a3a"/></svg>
<div class="t" style="left:951.83px;top:635.00px;font-size:9.67px;line-height:9.67px;color:#595959;transform:scaleX(0.9603);transform-origin:0 0;">363,792</div>
<div class="t" style="left:1019.62px;top:635.00px;font-size:9.67px;line-height:9.67px;color:#595959;transform:scaleX(0.9603);transform-origin:0 0;">351,960</div>
<div class="t" style="left:1087.71px;top:635.00px;font-size:9.67px;line-height:9.67px;color:#595959;transform:scaleX(0.9603);transform-origin:0 0;">321,351</div>
<div class="t" style="left:1161.48px;top:635.00px;font-size:9.67px;line-height:9.67px;color:#595959;transform:scaleX(0.9603);transform-origin:0 0;">11,832</div>
</div></div>
<div class="r" style="left:57px;top:562px;width:1px;height:50px;background:#8a8a8a;"></div>
<div class="r" style="left:57px;top:562px;width:5px;height:1px;background:#8a8a8a;"></div>
<div class="r" style="left:70.5px;top:568.5px;width:1.2999999999999972px;height:1.2999999999999545px;background:#777;"></div>
<div class="r" style="left:70.5px;top:582.9px;width:1.2999999999999972px;height:1.2999999999999545px;background:#777;"></div>
<div class="r" style="left:70.5px;top:597.4px;width:1.2999999999999972px;height:1.2999999999999545px;background:#777;"></div>
<div class="r" style="left:70.5px;top:608.2px;width:1.2999999999999972px;height:1.2999999999999545px;background:#777;"></div>
<div class="r" style="left:50.5px;top:612px;width:12px;height:12px;border:1px solid #a8a8a8;background:#e8e8e8;"></div>
<div class="r" style="left:53.8px;top:617.8px;width:7.400000000000006px;height:2.0px;background:#505050;"></div>
<div class="r" style="left:50.5px;top:633.7px;width:12px;height:12px;border:1px solid #a8a8a8;background:#e8e8e8;"></div>
<div class="r" style="left:53.8px;top:639.5px;width:7.400000000000006px;height:2.0px;background:#505050;"></div>
<div class="r" style="left:56.5px;top:636.7px;width:2.0px;height:7.600000000000023px;background:#505050;"></div>
<div class="r" style="left:1196px;top:102.8px;width:17px;height:549.2px;background:#e8e8e8;"></div>
<div class="r" style="left:1196px;top:102px;width:1.5px;height:550px;background:#d2d2d2;"></div>
<div class="r" style="left:1199.5px;top:102.5px;width:10.5px;height:10px;border:1px solid #cdcdcd;background:#fff;"></div>
<svg class="r" style="left:1201.5px;top:105.5px" width="9" height="6" viewBox="0 0 9 6"><path d="M4 1L6.7 4H1.3Z" fill="#555"/></svg>
<div class="r" style="left:1199.5px;top:113.5px;width:10.5px;height:231px;border:1px solid #cdcdcd;background:#fff;"></div>
<div class="r" style="left:1198.5px;top:346px;width:14.0px;height:295px;background:#dcdcdc;"></div>
<div class="r" style="left:1199.3px;top:640.6px;width:10.4px;height:9.4px;border:1px solid #cdcdcd;background:#fff;"></div>
<svg class="r" style="left:1201.5px;top:644px" width="9" height="6" viewBox="0 0 9 6"><path d="M1.3 1H6.7L4 4Z" fill="#555"/></svg>
<div class="r" style="left:49px;top:652px;width:1164px;height:21px;background:#e6e6e6;"></div>
<div class="r" style="left:49px;top:652px;width:1147px;height:1px;background:#d0d0d0;"></div>
<svg class="r" style="left:0;top:0" width="1232" height="692"><path d="M72.3 660.2V665.9L68.8 663.05Z" fill="#c2c2c2"/><path d="M91 660.2V665.9L94.6 663.05Z" fill="#c2c2c2"/></svg>
<div class="r" style="left:125.3px;top:652px;width:102.5px;height:19px;background:#ffffff;border-left:1px solid #9a9a9a;border-right:1px solid #d4d4d4;box-sizing:border-box;"></div>
<div class="r" style="left:125.5px;top:669.8px;width:102.30000000000001px;height:2.0px;background:#217346;"></div>
<div class="t" style="left:135.34px;top:656.00px;font-size:10.90px;line-height:10.90px;color:#217346;font-weight:bold;transform:scaleX(0.8972);transform-origin:0 0;">Revenue Analysis</div>
<div class="t" style="left:236.96px;top:656.00px;font-size:10.61px;line-height:10.61px;color:#666;transform:scaleX(1.0622);transform-origin:0 0;">Info</div>
<div class="r" style="left:267px;top:655px;width:1px;height:15px;background:#bdbdbd;"></div>
<div class="r" style="left:503.5px;top:657.5px;width:1.5px;height:1.5px;background:#aaa;"></div>
<div class="r" style="left:503.5px;top:661.5px;width:1.5px;height:1.5px;background:#aaa;"></div>
<div class="r" style="left:503.5px;top:665.5px;width:1.5px;height:1.5px;background:#aaa;"></div>
<div class="r" style="left:737px;top:658px;width:448.29999999999995px;height:11px;background:#dadada;"></div>
<div class="r" style="left:515.5px;top:658px;width:220px;height:9.5px;border:1px solid #c8c8c8;background:#fff;"></div>
<div class="r" style="left:526.3px;top:658px;width:1.0px;height:11px;background:#d6d6d6;"></div>
<svg class="r" style="left:517.5px;top:659.5px" width="8" height="8" viewBox="0 0 8 8"><path d="M5 1.3L2.2 4L5 6.7Z" fill="#555"/></svg>
<div class="r" style="left:1185.3px;top:658px;width:9.5px;height:10px;border:1px solid #c8c8c8;background:#fff;"></div>
<svg class="r" style="left:1187px;top:659.5px" width="8" height="8" viewBox="0 0 8 8"><path d="M3 1.3L5.8 4L3 6.7Z" fill="#555"/></svg>
</body></html>
